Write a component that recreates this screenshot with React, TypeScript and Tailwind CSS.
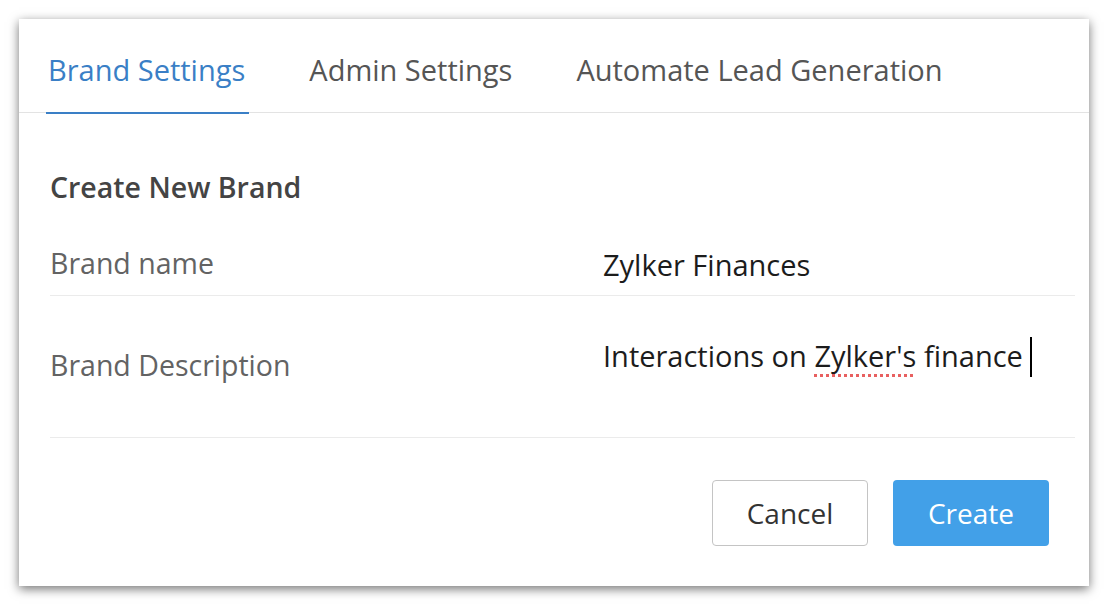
import React from "react";

export default function App() {
  const font = { fontFamily: "'Open Sans', Lato, sans-serif" };
  return (
    <div className="w-[1108px] h-[606px] bg-white overflow-hidden pt-[19px] pl-[19px]" style={font}>
      <div className="w-[1070px] h-[567px] bg-white shadow-[0_3px_10px_rgba(0,0,0,0.55)] flex flex-col">
        {/* Tabs */}
        <div className="h-[94px] border-b border-[#e3e3e3] flex items-end pl-[27px] gap-[60px]">
          <div className="relative h-[93px] px-[2px] flex items-start pt-[32px] text-[29px] leading-[38px] text-[#3a7fc6]">
            Brand Settings
            <div className="absolute left-0 right-[-2px] bottom-[-2px] h-[2px] bg-[#3a7fc6]" />
          </div>
          <div className="h-[93px] px-[2px] flex items-start pt-[32px] text-[29px] leading-[38px] text-[#555555]">
            Admin Settings
          </div>
          <div className="h-[93px] px-[2px] flex items-start pt-[32px] text-[29px] leading-[38px] text-[#555555]">
            Automate Lead Generation
          </div>
        </div>

        {/* Body */}
        <div className="pl-[31px] pr-[14px]">
          <div className="pt-[56px] h-[132px] text-[28.5px] leading-[36px] font-semibold text-[#444444]">
            Create New Brand
          </div>
          <div className="h-[51px] border-b border-[#ebebeb] flex">
            <div className="w-[553px] text-[28.5px] leading-[36px] text-[#636363]">Brand name</div>
            <div className="pt-[2px] text-[29px] leading-[36px] text-[#1c1c1c]">Zylker Finances</div>
          </div>
          <div className="h-[142px] border-b border-[#ebebeb] flex">
            <div className="w-[553px] pt-[51px] text-[28.5px] leading-[36px] text-[#636363]">Brand Description</div>
            <div className="pt-[42px] text-[29px] leading-[36px] text-[#1c1c1c] flex items-start">
              <span>
                Interactions on{" "}
                <span className="underline decoration-dotted decoration-[#e86060] decoration-[3px] underline-offset-[7px]">
                  Zylker's
                </span>{" "}
                finance
              </span>
              <span className="ml-[7px] mt-[-1px] w-[2px] h-[40px] bg-black" />
            </div>
          </div>
        </div>

        {/* Buttons */}
        <div className="flex justify-end gap-[25px] pr-[40px] pt-[42px]">
          <button className="w-[156px] h-[66px] rounded-[4px] border border-[#c4c4c4] bg-white text-[28px] text-[#333333]">
            Cancel
          </button>
          <button className="w-[156px] h-[66px] rounded-[4px] bg-[#42a0e8] text-[28px] text-white">
            Create
          </button>
        </div>
      </div>
    </div>
  );
}
